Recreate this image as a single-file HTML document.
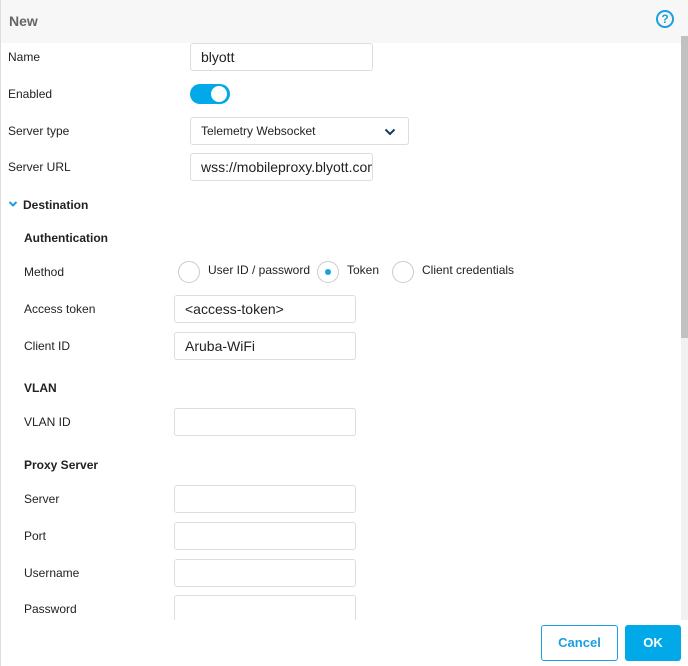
<!DOCTYPE html>
<html style="overflow:hidden"><head><style>
*{margin:0;padding:0;box-sizing:border-box}
html,body{width:688px;height:666px;overflow:hidden}
body{background:#fff;font-family:"Liberation Sans",sans-serif;color:#222;position:relative}
.bl{position:absolute;left:0;top:0;width:1px;height:666px;background:#ddd}
.hd{position:absolute;left:0;top:0;width:688px;height:43px;background:#f7f7f7}
.hd b{position:absolute;left:9px;top:13px;font-size:14px;color:#666}
.help{position:absolute;left:656px;top:10px;width:18px;height:18px;border:2px solid #1b9fe0;border-radius:50%;color:#1b9fe0;font-size:12px;font-weight:bold;text-align:center;line-height:14px}
.clip{position:absolute;left:0;top:43px;width:681px;height:577px;overflow:hidden}
.l{position:absolute;font-size:12px;color:#222}
.b{font-weight:bold}
.in{position:absolute;height:28px;border:1px solid #ddd;border-radius:3px;font-size:14px;padding-left:10px;line-height:26px;white-space:nowrap;overflow:hidden;color:#222}
.r{position:absolute;width:22px;height:22px;border:1px solid #ccc;border-radius:50%;background:#fff}
.sb{position:absolute;left:681px;top:36px;width:7px;height:584px;background:#f1f1f1}
.th{position:absolute;left:681px;top:36px;width:7px;height:302px;background:#c1c1c1}
.btn{position:absolute;top:625px;height:36px;border-radius:3px;font-size:13px;font-weight:bold;text-align:center;line-height:34px}
</style></head><body>
<div class="hd"><b>New</b><div class="help">?</div></div>
<div class="clip">
<div style="position:absolute;top:-43px;left:0;width:681px;height:620px">
<div class="l" style="left:8px;top:50px">Name</div>
<div class="in" style="left:190px;top:43px;width:183px">blyott</div>
<div class="l" style="left:8px;top:87px">Enabled</div>
<div style="position:absolute;left:190px;top:84px;width:40px;height:20px;border-radius:10px;background:#01a9e8"></div>
<div style="position:absolute;left:211px;top:86px;width:16px;height:16px;border-radius:50%;background:#fff"></div>
<div class="l" style="left:8px;top:124px">Server type</div>
<div class="in" style="left:190px;top:117px;width:219px;font-size:12px">Telemetry Websocket
<svg style="position:absolute;left:193px;top:10px" width="12" height="8" viewBox="0 0 12 8"><path d="M1.5 1.5L6 6l4.5-4.5" stroke="#1a3a5a" stroke-width="2" fill="none"/></svg></div>
<div class="l" style="left:8px;top:160px">Server URL</div>
<div class="in" style="left:190px;top:153px;width:183px">wss://mobileproxy.blyott.com</div>
<svg style="position:absolute;left:8px;top:200px" width="10" height="8" viewBox="0 0 10 8"><path d="M1.5 2L5 5.5 8.5 2" stroke="#1b9fe0" stroke-width="2" fill="none"/></svg>
<div class="l b" style="left:23px;top:198px">Destination</div>
<div class="l b" style="left:24px;top:231px">Authentication</div>
<div class="l" style="left:24px;top:265px">Method</div>
<div class="r" style="left:178px;top:261px"></div>
<div class="l" style="left:208px;top:263px">User ID / password</div>
<div class="r" style="left:317px;top:261px"><div style="position:absolute;left:7px;top:7px;width:6px;height:6px;border-radius:50%;background:#1b9fe0"></div></div>
<div class="l" style="left:347px;top:263px">Token</div>
<div class="r" style="left:392px;top:261px"></div>
<div class="l" style="left:422px;top:263px">Client credentials</div>
<div class="l" style="left:24px;top:302px">Access token</div>
<div class="in" style="left:174px;top:295px;width:182px">&lt;access-token&gt;</div>
<div class="l" style="left:24px;top:339px">Client ID</div>
<div class="in" style="left:174px;top:332px;width:182px">Aruba-WiFi</div>
<div class="l b" style="left:24px;top:381px">VLAN</div>
<div class="l" style="left:24px;top:415px">VLAN ID</div>
<div class="in" style="left:174px;top:408px;width:182px"></div>
<div class="l b" style="left:24px;top:458px">Proxy Server</div>
<div class="l" style="left:24px;top:492px">Server</div>
<div class="in" style="left:174px;top:485px;width:182px"></div>
<div class="l" style="left:24px;top:529px">Port</div>
<div class="in" style="left:174px;top:522px;width:182px"></div>
<div class="l" style="left:24px;top:566px">Username</div>
<div class="in" style="left:174px;top:559px;width:182px"></div>
<div class="l" style="left:24px;top:602px">Password</div>
<div class="in" style="left:174px;top:595px;width:182px"></div>
</div></div>
<div class="bl"></div>
<div class="sb"></div><div class="th"></div>
<div class="btn" style="left:541px;width:77px;border:1px solid #1b9fe0;color:#1b9fe0;background:#fff">Cancel</div>
<div class="btn" style="left:625px;width:56px;background:#01a9e8;color:#fff;line-height:36px">OK</div>
</body></html>
